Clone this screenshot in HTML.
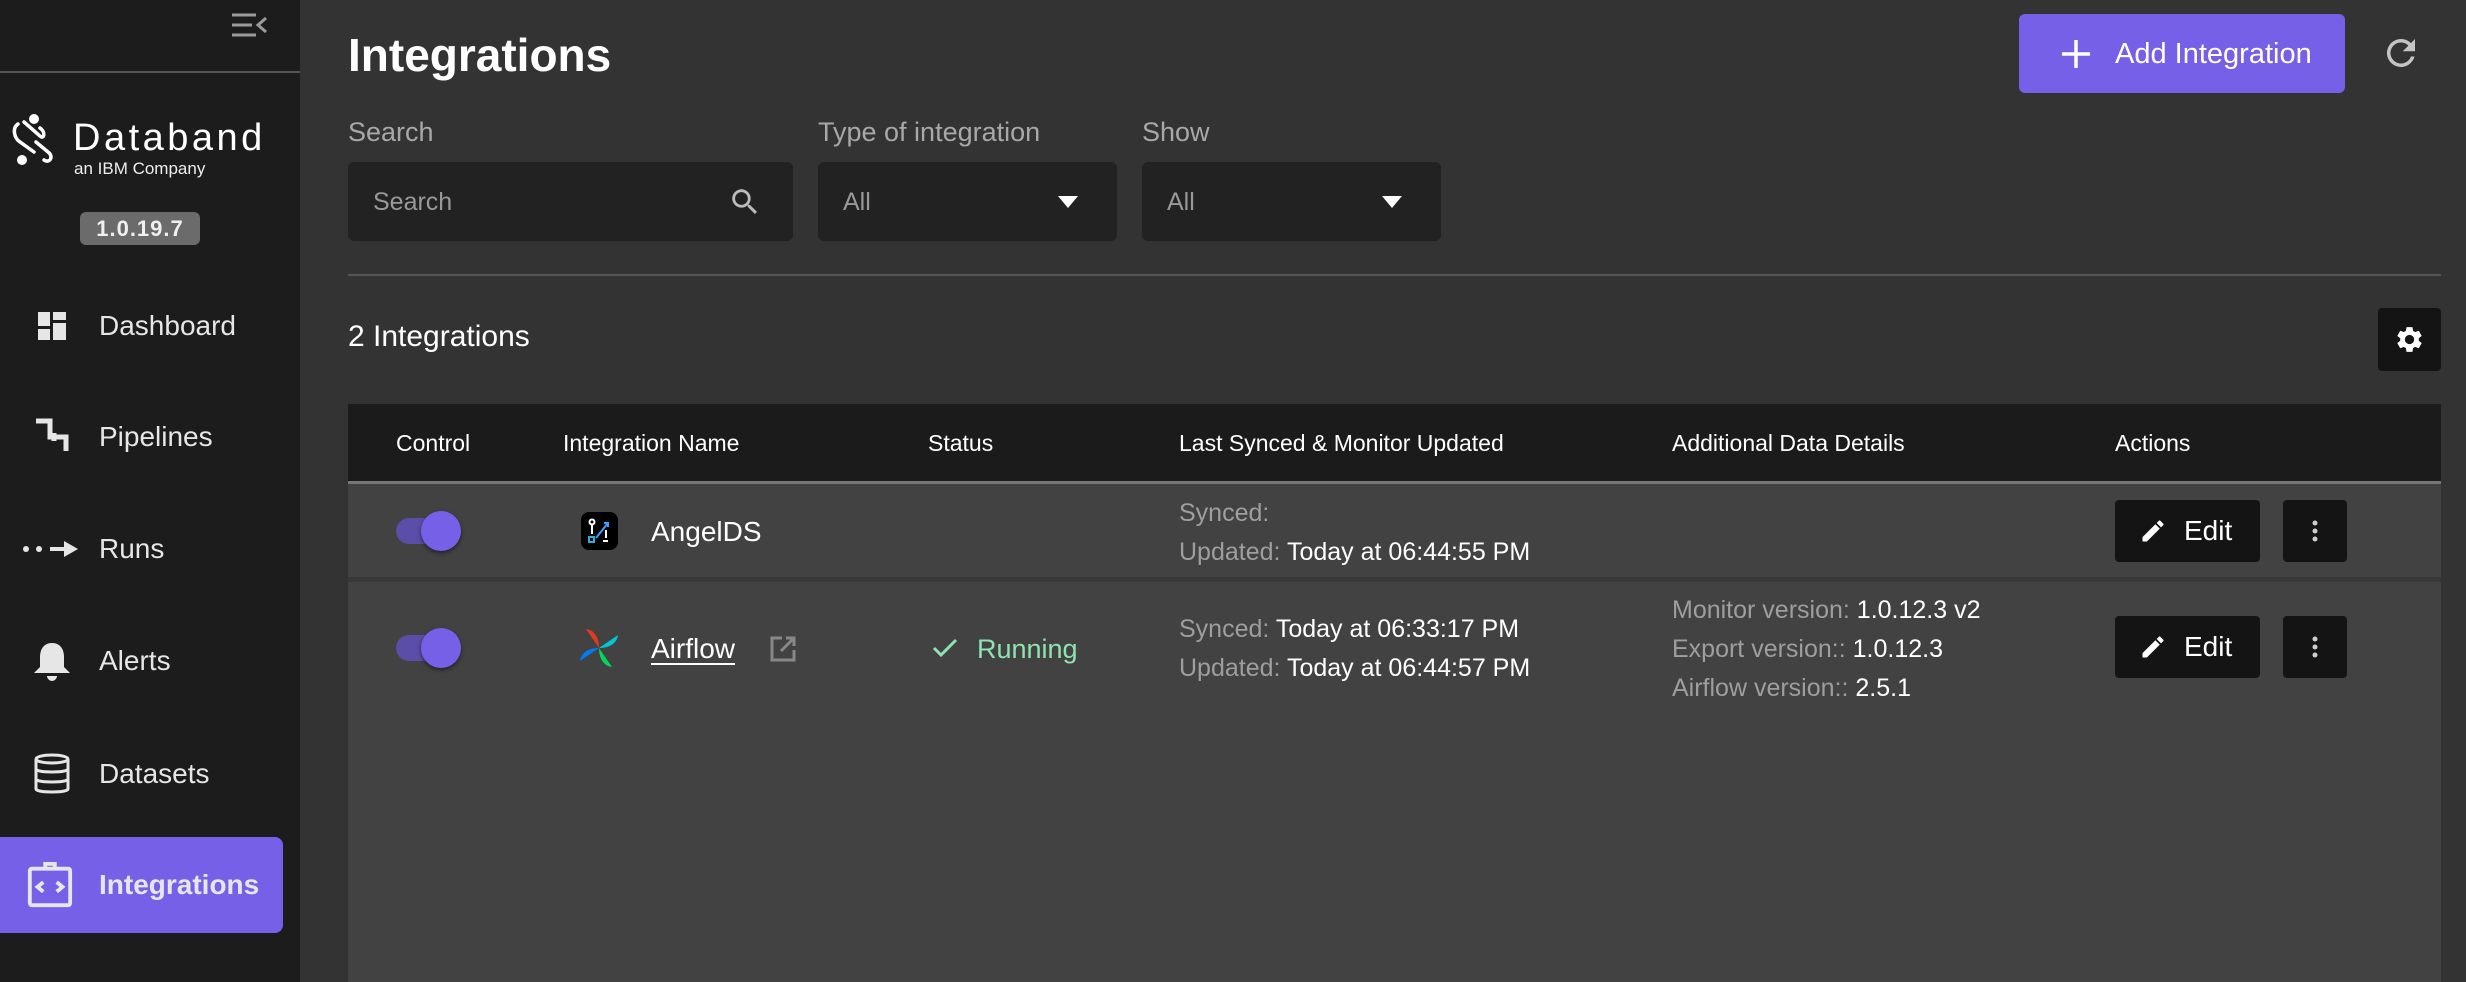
<!DOCTYPE html>
<html><head><meta charset="utf-8"><style>
*{margin:0;padding:0;box-sizing:border-box}
body{width:2466px;height:982px;overflow:hidden;background:#333;font-family:"Liberation Sans",sans-serif;color:#fff;position:relative}
.a{position:absolute}
.side{left:0;top:0;width:300px;height:982px;background:#1c1c1c}
.nav{position:absolute;left:0;width:283px;height:96px;display:flex;align-items:center;font-size:28px;color:#e6e6e6}
.nav .ic{position:absolute;left:28px;width:48px;height:48px;display:flex;align-items:center;justify-content:center}
.nav span{position:absolute;left:99px}
.lbl{font-size:27px;color:#a8a8a8}
.inp{background:#222;border-radius:6px;height:79px;top:162px}
.inp span{position:absolute;left:25px;top:26px;font-size:25px;color:#999}
.th{top:405px;height:77px;line-height:77px;font-size:23px;color:#fff}
.g{color:#9e9e9e}
.cell{font-size:25px}
.btn{background:#141414;border-radius:4px}
</style></head><body>
<div class="a side">
  <svg class="a" style="left:230px;top:12px" width="38" height="26" viewBox="0 0 38 26"><g stroke="#9a9a9a" stroke-width="3" fill="none"><path d="M2 3H26M2 13H22M2 23H26M36 6L28 13L36 20"/></g></svg>
  <div class="a" style="left:0;top:71px;width:300px;height:2px;background:#555"></div>
  <svg class="a" style="left:10px;top:112px" width="48" height="56" viewBox="0 0 48 56"><g fill="none" stroke="#fff" stroke-width="3.5" stroke-linecap="round"><path d="M8 12 C2 16 4 26 10 30 L24 40"/><path d="M14 10 L30 24 C34 28 36 20 30 16"/><path d="M26 30 L38 40 C44 44 40 52 34 48"/></g><circle cx="24" cy="7" r="5" fill="#fff"/><circle cx="12" cy="48" r="5" fill="#fff"/></svg>
  <div class="a" style="left:73px;top:119px;font-size:38px;letter-spacing:3.5px;line-height:1">Databand</div>
  <div class="a" style="left:74px;top:160px;font-size:17px;line-height:1;color:#eee">an IBM Company</div>
  <div class="a" style="left:80px;top:212px;width:120px;height:33px;background:#6b6b6b;border-radius:6px;font-size:22px;font-weight:bold;text-align:center;line-height:33px;letter-spacing:1px;color:#f0f0f0">1.0.19.7</div>
  <div class="nav" style="top:278px"><div class="ic"><svg width="32" height="32" viewBox="0 0 32 32" fill="#e6e6e6"><rect x="2" y="2" width="12" height="14"/><rect x="2" y="19" width="12" height="11"/><rect x="17" y="2" width="13" height="8"/><rect x="17" y="13" width="13" height="17"/></svg></div><span>Dashboard</span></div>
  <div class="nav" style="top:389px"><div class="ic"><svg width="40" height="40" viewBox="0 0 40 40" fill="none" stroke="#e6e6e6" stroke-width="5"><path d="M4 4H18V20H34V34"/><path d="M22 16V24"/></svg></div><span>Pipelines</span></div>
  <div class="nav" style="top:501px"><div class="ic" style="left:22px;width:60px"><svg width="60" height="20" viewBox="0 0 60 20" fill="#e6e6e6"><circle cx="4" cy="10" r="3"/><circle cx="17" cy="10" r="3"/><rect x="28" y="8" width="16" height="4"/><path d="M42 2L56 10L42 18Z"/></svg></div><span>Runs</span></div>
  <div class="nav" style="top:613px"><div class="ic"><svg width="44" height="44" viewBox="0 0 44 44" fill="#e6e6e6"><path d="M22 4C14 4 10 10 10 18V28L4 34H40L34 28V18C34 10 30 4 22 4Z"/><path d="M17 37H27C27 40 24 42 22 42C20 42 17 40 17 37Z"/></svg></div><span>Alerts</span></div>
  <div class="nav" style="top:726px"><div class="ic"><svg width="38" height="42" viewBox="0 0 38 42" fill="none" stroke="#e6e6e6" stroke-width="3"><ellipse cx="19" cy="6" rx="16" ry="4"/><path d="M3 6V36C3 40 35 40 35 36V6M3 16C3 20 35 20 35 16M3 26C3 30 35 30 35 26"/></svg></div><span>Datasets</span></div>
  <div class="nav" style="top:837px;background:#7660e8;border-radius:0 8px 8px 0"><div class="ic" style="left:26px"><svg width="50" height="50" viewBox="0 0 50 50" fill="none" stroke="#e6e6e6" stroke-width="4"><rect x="4" y="8" width="42" height="38" rx="2"/><path d="M20 8V3H30V8"/><path d="M18 22L12 27L18 32M32 22L38 27L32 32" stroke-width="4"/></svg></div><span style="font-weight:bold">Integrations</span></div>
</div>
<div class="a" style="left:348px;top:28px;font-size:46px;font-weight:bold">Integrations</div>
<div class="a" style="left:2019px;top:14px;width:326px;height:79px;background:#7660e8;border-radius:6px"><svg class="a" style="left:42px;top:25px" width="30" height="30" viewBox="0 0 30 30"><path d="M15 1V29M1 15H29" stroke="#fff" stroke-width="3.5"/></svg><div class="a" style="left:96px;top:24px;font-size:29px">Add Integration</div></div>
<svg class="a" style="left:2380px;top:32px" width="42" height="42" viewBox="0 0 24 24"><path fill="#c4c4c4" d="M17.65 6.35A7.96 7.96 0 0 0 12 4a8 8 0 1 0 7.73 10h-2.08A6 6 0 1 1 12 6c1.66 0 3.14.69 4.22 1.78L13 11h7V4l-2.35 2.35z"/></svg>
<div class="a lbl" style="left:348px;top:117px">Search</div>
<div class="a lbl" style="left:818px;top:117px">Type of integration</div>
<div class="a lbl" style="left:1142px;top:117px">Show</div>
<div class="a inp" style="left:348px;width:445px"><span>Search</span><svg class="a" style="left:380px;top:23px" width="34" height="34" viewBox="0 0 24 24"><path fill="#bbb" d="M15.5 14h-.79l-.28-.27A6.470 6.47 0 0 0 16 9.5 6.5 6.5 0 1 0 9.5 16c1.61 0 3.09-.59 4.23-1.570l.27.28v.79l5 4.99L20.49 19l-4.99-5zm-6 0C7.010 14 5 11.99 5 9.5S7.01 5 9.5 5 14 7.01 14 9.5 11.99 14 9.5 14z"/></svg></div>
<div class="a inp" style="left:818px;width:299px"><span>All</span><svg class="a" style="left:240px;top:34px" width="20" height="12"><path d="M0 0H20L10 12Z" fill="#fff"/></svg></div>
<div class="a inp" style="left:1142px;width:299px"><span>All</span><svg class="a" style="left:240px;top:34px" width="20" height="12"><path d="M0 0H20L10 12Z" fill="#fff"/></svg></div>
<div class="a" style="left:348px;top:274px;width:2093px;height:2px;background:#555"></div>
<div class="a" style="left:348px;top:320px;font-size:30px">2 Integrations</div>
<div class="a btn" style="left:2378px;top:308px;width:63px;height:63px"><svg class="a" style="left:16px;top:16px" width="31" height="31" viewBox="0 0 24 24"><path fill="#fff" d="M19.14 12.94c.04-.3.06-.61.06-.94 0-.32-.02-.64-.07-.94l2.030-1.58a.49.49 0 0 0 .12-.61l-1.92-3.32a.49.49 0 0 0-.59-.22l-2.39.96c-.5-.38-1.03-.7-1.62-.94l-.36-2.54a.48.48 0 0 0-.48-.41h-3.84c-.24 0-.43.17-.47.41l-.36 2.54c-.59.24-1.130.57-1.62.94l-2.39-.96a.48.48 0 0 0-.59.22L2.74 8.87c-.12.21-.08.47.12.61l2.03 1.58c-.05.3-.09.63-.09.94s.02.64.07.94l-2.03 1.58a.49.49 0 0 0-.12.61l1.92 3.32c.12.22.37.29.59.22l2.39-.96c.5.38 1.03.7 1.62.94l.36 2.54c.05.24.24.41.48.41h3.84c.24 0 .44-.17.47-.41l.36-2.54c.59-.24 1.13-.56 1.62-.94l2.39.96c.22.08.47 0 .59-.22l1.92-3.32c.12-.22.07-.47-.12-.61l-2.01-1.58zM12 15.6A3.6 3.6 0 1 1 12 8.4a3.6 3.6 0 0 1 0 7.2z"/></svg></div>
<div class="a" style="left:348px;top:404px;width:2093px;height:578px;background:#424242"></div>
<div class="a" style="left:348px;top:404px;width:2093px;height:77px;background:#1b1b1b"></div>
<div class="a" style="left:348px;top:481px;width:2093px;height:3px;background:#777"></div>
<div class="a" style="left:348px;top:577px;width:2093px;height:5px;background:#383838"></div>
<div class="a th" style="left:396px">Control</div>
<div class="a th" style="left:563px">Integration Name</div>
<div class="a th" style="left:928px">Status</div>
<div class="a th" style="left:1179px">Last Synced &amp; Monitor Updated</div>
<div class="a th" style="left:1672px">Additional Data Details</div>
<div class="a th" style="left:2115px">Actions</div>
<div class="a" style="left:396px;top:518px;width:50px;height:26px;border-radius:13px;background:#5b4ea8"></div>
<div class="a" style="left:421px;top:511px;width:40px;height:40px;border-radius:50%;background:#7660e8;box-shadow:0 2px 4px rgba(0,0,0,.5)"></div>
<svg class="a" style="left:581px;top:512px" width="37" height="38" viewBox="0 0 37 38"><rect width="37" height="38" rx="8" fill="#000"/><g fill="none" stroke-width="2"><circle cx="11" cy="10" r="2.5" stroke="#fff"/><path d="M11 13V22" stroke="#fff"/><path d="M15 26L27 11M23 11H27V15" stroke="#3aa0ff"/><rect x="8" y="25" width="5" height="5" stroke="#3ad"/><path d="M25 18V26M22 29H27" stroke="#fff"/></g></svg>
<div class="a cell" style="left:651px;top:516px;font-size:28px">AngelDS</div>
<div class="a cell g" style="left:1179px;top:499px">Synced:</div>
<div class="a cell" style="left:1179px;top:538px"><span class="g">Updated:</span> Today at 06:44:55 PM</div>
<div class="a btn" style="left:2115px;top:500px;width:145px;height:62px"><svg class="a" style="left:24px;top:17px" width="28" height="28" viewBox="0 0 24 24"><path fill="#fff" d="M3 17.25V21h3.75L17.81 9.94l-3.75-3.75L3 17.25zM20.71 7.04a1 1 0 0 0 0-1.41l-2.34-2.34a1 1 0 0 0-1.41 0l-1.83 1.83 3.75 3.75 1.83-1.83z"/></svg><div class="a" style="left:69px;top:15px;font-size:28px">Edit</div></div>
<div class="a btn" style="left:2283px;top:500px;width:64px;height:62px"><svg class="a" style="left:28px;top:20px" width="8" height="22"><circle cx="4" cy="3" r="2.5" fill="#ccc"/><circle cx="4" cy="11" r="2.5" fill="#ccc"/><circle cx="4" cy="19" r="2.5" fill="#ccc"/></svg></div>
<div class="a" style="left:396px;top:635px;width:50px;height:26px;border-radius:13px;background:#5b4ea8"></div>
<div class="a" style="left:421px;top:628px;width:40px;height:40px;border-radius:50%;background:#7660e8;box-shadow:0 2px 4px rgba(0,0,0,.5)"></div>
<svg class="a" style="left:578px;top:627px" width="42" height="42" viewBox="0 0 42 42"><path d="M21 21L8 2C16 3 21 10 21 21Z" fill="#e43921"/><path d="M21 21L40 8C39 16 32 21 21 21Z" fill="#00c7d4"/><path d="M21 21L34 40C26 39 21 32 21 21Z" fill="#04d659"/><path d="M21 21L2 34C3 26 10 21 21 21Z" fill="#017cee"/><path d="M21 21L34 40C30 34 24 26 21 21Z" fill="#00ad46"/></svg>
<div class="a cell" style="left:651px;top:633px;font-size:28px;text-decoration:underline;text-underline-offset:5px">Airflow</div>
<svg class="a" style="left:770px;top:636px" width="26" height="26" viewBox="0 0 26 26" fill="none" stroke="#888" stroke-width="3"><path d="M12 2H2V24H24V14M16 2H24V10M24 2L11 15"/></svg>
<svg class="a" style="left:932px;top:637px" width="26" height="22" viewBox="0 0 26 22"><path d="M2 11L9 18L24 3" fill="none" stroke="#8fe3b0" stroke-width="3"/></svg>
<div class="a cell" style="left:977px;top:634px;font-size:27px;color:#8fe3b0">Running</div>
<div class="a cell" style="left:1179px;top:615px"><span class="g">Synced:</span> Today at 06:33:17 PM</div>
<div class="a cell" style="left:1179px;top:654px"><span class="g">Updated:</span> Today at 06:44:57 PM</div>
<div class="a cell" style="left:1672px;top:596px"><span class="g">Monitor version:</span> 1.0.12.3 v2</div>
<div class="a cell" style="left:1672px;top:635px"><span class="g">Export version::</span> 1.0.12.3</div>
<div class="a cell" style="left:1672px;top:674px"><span class="g">Airflow version::</span> 2.5.1</div>
<div class="a btn" style="left:2115px;top:616px;width:145px;height:62px"><svg class="a" style="left:24px;top:17px" width="28" height="28" viewBox="0 0 24 24"><path fill="#fff" d="M3 17.25V21h3.75L17.81 9.94l-3.75-3.75L3 17.25zM20.71 7.04a1 1 0 0 0 0-1.41l-2.34-2.34a1 1 0 0 0-1.41 0l-1.83 1.83 3.75 3.75 1.83-1.83z"/></svg><div class="a" style="left:69px;top:15px;font-size:28px">Edit</div></div>
<div class="a btn" style="left:2283px;top:616px;width:64px;height:62px"><svg class="a" style="left:28px;top:20px" width="8" height="22"><circle cx="4" cy="3" r="2.5" fill="#ccc"/><circle cx="4" cy="11" r="2.5" fill="#ccc"/><circle cx="4" cy="19" r="2.5" fill="#ccc"/></svg></div>
</body></html>
